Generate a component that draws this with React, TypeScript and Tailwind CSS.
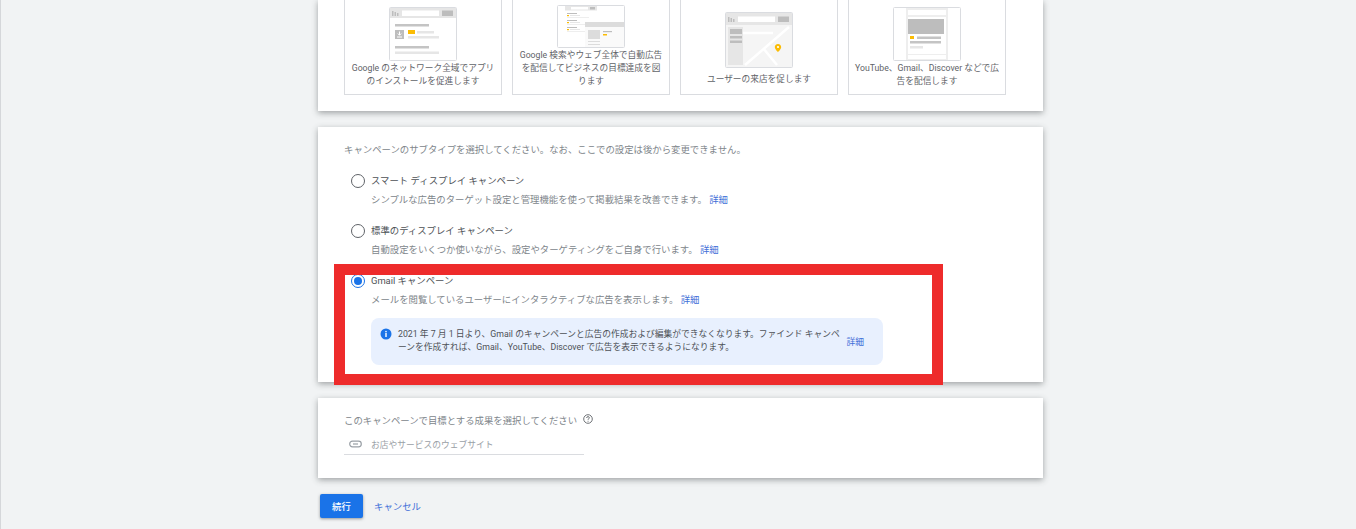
import React from 'react';

const font = { fontFamily: 'Roboto, "Noto Sans CJK JP", sans-serif' };

const SearchBar = ({ w = 68 }: { w?: number }) => (
  <>
    <rect x="0.5" y="0.5" width={w - 1} height="53" fill="#fff" stroke="#dadce0" rx="1" />
    <rect x="1" y="1" width={w - 2} height="10" fill="#e6e6e6" />
    <rect x="3" y="4" width="1.5" height="5" fill="#bdbdbd" />
    <rect x="5.5" y="5" width="1.5" height="4" fill="#bdbdbd" />
    <rect x="8" y="6" width="1.5" height="3" fill="#bdbdbd" />
    <rect x="13" y="3.5" width="37" height="5.5" fill="#fff" />
    <rect x="53" y="3.5" width="11" height="5.5" fill="#bdbdbd" />
  </>
);

const AppThumb = () => (
  <svg width="68" height="54" viewBox="0 0 68 54">
    <SearchBar />
    <rect x="6" y="17" width="34" height="2.5" fill="#c4c4c4" />
    <rect x="6" y="23" width="9" height="9" fill="#bdbdbd" />
    <path d="M10.5 24.5v3.5M8.8 26.5l1.7 1.8 1.7-1.8M8 30h5" stroke="#fff" strokeWidth="1" fill="none" />
    <rect x="19" y="23" width="7" height="4" fill="#fbbc04" />
    <rect x="28" y="24" width="17" height="2.5" fill="#e6e6e6" />
    <rect x="19" y="29" width="31" height="2.5" fill="#e6e6e6" />
    <rect x="6" y="39" width="34" height="2.5" fill="#c4c4c4" />
    <rect x="6" y="44.5" width="44" height="2.5" fill="#e6e6e6" />
  </svg>
);

const SearchThumb = () => (
  <svg width="68" height="43" viewBox="0 0 68 43">
    <rect x="0.5" y="0.5" width="67" height="42" fill="#fff" stroke="#dadce0" rx="1" />
    <rect x="8" y="1" width="32" height="4.5" fill="#e6e6e6" />
    <rect x="14" y="2" width="17" height="2.5" fill="#fff" />
    <rect x="33" y="2" width="5" height="2.5" fill="#bdbdbd" />
    {[8, 15, 22].map(y => (
      <g key={y}>
        <rect x="10" y={y} width="10" height="1" fill="#bdbdbd" />
        <rect x="10" y={y + 2} width="2" height="1.2" fill="#fbbc04" />
        <rect x="13" y={y + 2} width="10" height="1" fill="#e6e6e6" />
        <rect x="10" y={y + 4} width="22" height="1" fill="#eeeeee" />
      </g>
    ))}
    <rect x="28" y="17" width="39" height="25" fill="#fafafa" />
    <rect x="28" y="17" width="39" height="5" fill="#dcdcdc" />
    <rect x="31" y="25" width="12" height="9" fill="#dcdcdc" />
    <rect x="46" y="26" width="9" height="1.2" fill="#bdbdbd" />
    <rect x="46" y="29" width="4" height="1.5" fill="#fbbc04" />
    <rect x="31" y="36" width="12" height="1" fill="#dcdcdc" />
    <rect x="31" y="39" width="12" height="1" fill="#dcdcdc" />
  </svg>
);

const MapThumb = () => (
  <svg width="68" height="56" viewBox="0 0 68 56">
    <rect x="0.5" y="0.5" width="67" height="55" fill="#f5f5f5" stroke="#dadce0" rx="1" />
    <rect x="1" y="1" width="66" height="12" fill="#e6e6e6" />
    <rect x="3" y="5" width="1.5" height="5" fill="#bdbdbd" />
    <rect x="5.5" y="6" width="1.5" height="4" fill="#bdbdbd" />
    <rect x="8" y="7" width="1.5" height="3" fill="#bdbdbd" />
    <rect x="13" y="4.5" width="37" height="5.5" fill="#fff" />
    <rect x="53" y="4.5" width="11" height="5.5" fill="#bdbdbd" />
    <rect x="3" y="15" width="15" height="38" fill="#e6e6e6" />
    <rect x="5" y="17" width="12" height="5" fill="#bdbdbd" />
    <rect x="5" y="24" width="12" height="2.5" fill="#bdbdbd" />
    <rect x="5" y="28.5" width="12" height="2.5" fill="#bdbdbd" />
    <path d="M18 21h30M64 15 L20 53M38 36l14 17" stroke="#fff" strokeWidth="2.5" fill="none" />
    <path d="M53 32c-2 0-3.2 1.4-3.2 3.1 0 2.2 3.2 5.1 3.2 5.1s3.2-2.9 3.2-5.1c0-1.7-1.2-3.1-3.2-3.1z" fill="#fbbc04" />
    <circle cx="53" cy="35" r="1.1" fill="#fff" />
  </svg>
);

const GmailThumb = () => (
  <svg width="68" height="54" viewBox="0 0 68 54">
    <rect x="0.5" y="0.5" width="67" height="53" fill="#fff" stroke="#dadce0" rx="1" />
    <rect x="13" y="1" width="42" height="52" fill="#eeeeee" />
    <rect x="15" y="3" width="38" height="5" fill="#fff" />
    <rect x="15" y="10" width="38" height="37" fill="#fff" />
    <rect x="15" y="12" width="36" height="15" fill="#bdbdbd" />
    <rect x="17" y="29" width="4" height="3" fill="#fbbc04" />
    <rect x="24" y="29.5" width="24" height="2.5" fill="#c4c4c4" />
    <rect x="17" y="34" width="31" height="2.5" fill="#c4c4c4" />
    <rect x="17" y="39" width="13" height="2.5" fill="#e6e6e6" />
    <rect x="15" y="48" width="38" height="4" fill="#fff" />
  </svg>
);

const tiles = [
  { thumb: <AppThumb />, lines: ['Google のネットワーク全域でアプリ', 'のインストールを促進します'], pb: 'pb-[6px]' },
  { thumb: <SearchThumb />, lines: ['Google 検索やウェブ全体で自動広告', 'を配信してビジネスの目標達成を図', 'ります'], pb: 'pb-[6px]' },
  { thumb: <MapThumb />, lines: ['ユーザーの来店を促します'], pb: 'pb-[8px]' },
  { thumb: <GmailThumb />, lines: ['YouTube、Gmail、Discover などで広', '告を配信します'], pb: 'pb-[6px]' },
];

const Radio = ({ checked }: { checked?: boolean }) => (
  <span className={`flex h-[14px] w-[14px] shrink-0 items-center justify-center rounded-full border-[1.5px] ${checked ? 'border-[#1a73e8]' : 'border-[#5f6368]'}`}>
    {checked && <span className="h-[8px] w-[8px] rounded-full bg-[#1a73e8]" />}
  </span>
);

const options = [
  { title: 'スマート ディスプレイ キャンペーン', desc: 'シンプルな広告のターゲット設定と管理機能を使って掲載結果を改善できます。' },
  { title: '標準のディスプレイ キャンペーン', desc: '自動設定をいくつか使いながら、設定やターゲティングをご自身で行います。' },
  { title: 'Gmail キャンペーン', desc: 'メールを閲覧しているユーザーにインタラクティブな広告を表示します。', checked: true },
];

export default function App() {
  return (
    <div style={font} className="h-[529px] w-[1356px] overflow-hidden border-l border-[#d5d7da] bg-[#f1f3f4] pl-[317px] text-[9.4px] leading-[13px]">
      <div className="w-[725px]">
        {/* キャンペーンの種類 */}
        <div className="flex h-[111px] items-end gap-[10px] bg-white pb-[16px] pl-[26px] shadow-[0_2px_6px_rgba(60,64,67,0.45)]">
          {tiles.map((t, i) => (
            <div key={i} className={`flex h-[110px] w-[158px] shrink-0 flex-col items-center justify-end border border-[#dadce0] text-center text-[8.7px] text-[#5f6368] ${t.pb}`}>
              <div className="flex">{t.thumb}</div>
              <div className={i === 2 ? 'mt-[5px]' : 'mt-[1px]'}>
                {t.lines.map(l => <div key={l} className="whitespace-nowrap">{l}</div>)}
              </div>
            </div>
          ))}
        </div>

        {/* サブタイプ */}
        <div className="relative mt-[16px] h-[255px] bg-white pl-[26px] pt-[16px] shadow-[0_2px_6px_rgba(60,64,67,0.45)]">
          <div className="text-[#80868b]">キャンペーンのサブタイプを選択してください。なお、ここでの設定は後から変更できません。</div>
          <div className="mt-[18px] flex flex-col gap-[18px] pl-[7px]">
            {options.map(o => (
              <div key={o.title}>
                <div className="flex items-center gap-[6px]">
                  <Radio checked={o.checked} />
                  <span className="-mt-[1px] text-[#4d5156]">{o.title}</span>
                </div>
                <div className="mt-[5px] pl-[20px] text-[#80868b]">
                  {o.desc} <span className="text-[#3f6fd8]">詳細</span>
                </div>
              </div>
            ))}
          </div>
          <div className="ml-[27px] mt-[12px] flex h-[47px] w-[512px] items-center rounded-[8px] bg-[#e8f0fe] pl-[9px] pr-[19px] text-[8.75px] text-[#4d5156]">
            <svg width="12" height="12" viewBox="0 0 12 12" className="mb-[15px] mr-[6px] shrink-0">
              <circle cx="6" cy="6" r="5.5" fill="#1a73e8" />
              <rect x="5.3" y="5" width="1.4" height="4" fill="#fff" />
              <rect x="5.3" y="2.9" width="1.4" height="1.4" fill="#fff" />
            </svg>
            <div className="mb-[2px] shrink-0 whitespace-nowrap">
              2021 年 7 月 1 日より、Gmail のキャンペーンと広告の作成および編集ができなくなります。ファインド キャンペ<br />
              ーンを作成すれば、Gmail、YouTube、Discover で広告を表示できるようになります。
            </div>
            <span className="ml-auto mt-[2px] shrink-0 whitespace-nowrap text-[#3f6fd8]">詳細</span>
          </div>
          <div className="pointer-events-none absolute left-[16px] top-[137px] h-[121px] w-[609px] border-[11px] border-[#ee2b2b]" />
        </div>

        {/* 目標 */}
        <div className="mt-[16px] h-[80px] bg-white pl-[26px] pt-[16px] shadow-[0_2px_6px_rgba(60,64,67,0.45)]">
          <div className="flex items-center text-[#80868b]">
            このキャンペーンで目標とする成果を選択してください
            <svg width="10" height="10" viewBox="0 0 10 10" className="mb-[3px] ml-[6px]">
              <circle cx="5" cy="5" r="4.3" fill="none" stroke="#5f6368" strokeWidth="0.9" />
              <path d="M3.6 4c0-.9.6-1.4 1.4-1.4s1.4.5 1.4 1.2c0 .9-1.4 1-1.4 2" fill="none" stroke="#5f6368" strokeWidth="0.9" />
              <rect x="4.6" y="6.8" width="0.9" height="0.9" fill="#5f6368" />
            </svg>
          </div>
          <div className="mt-[10px] flex h-[18px] w-[240px] items-start border-b border-[#dadce0] pl-[5px] pt-[2px] text-[8.75px] text-[#9aa0a6]">
            <svg width="13" height="12" viewBox="0 0 13 12" className="-mt-[1px] mr-[9px] shrink-0">
              <rect x="0.7" y="3.2" width="11.6" height="5.6" rx="2.8" fill="none" stroke="#9aa0a6" strokeWidth="1.2" />
              <path d="M4 6h5" stroke="#9aa0a6" strokeWidth="1.2" />
            </svg>
            お店やサービスのウェブサイト
          </div>
        </div>

        {/* ボタン */}
        <div className="mt-[16px] flex items-center pl-[2px]">
          <button className="h-[24px] w-[43px] rounded-[2px] bg-[#1a73e8] font-medium text-white shadow-[0_1px_3px_rgba(60,64,67,0.5)]">続行</button>
          <span className="ml-[11px] text-[#3f6fd8]">キャンセル</span>
        </div>
      </div>
    </div>
  );
}
